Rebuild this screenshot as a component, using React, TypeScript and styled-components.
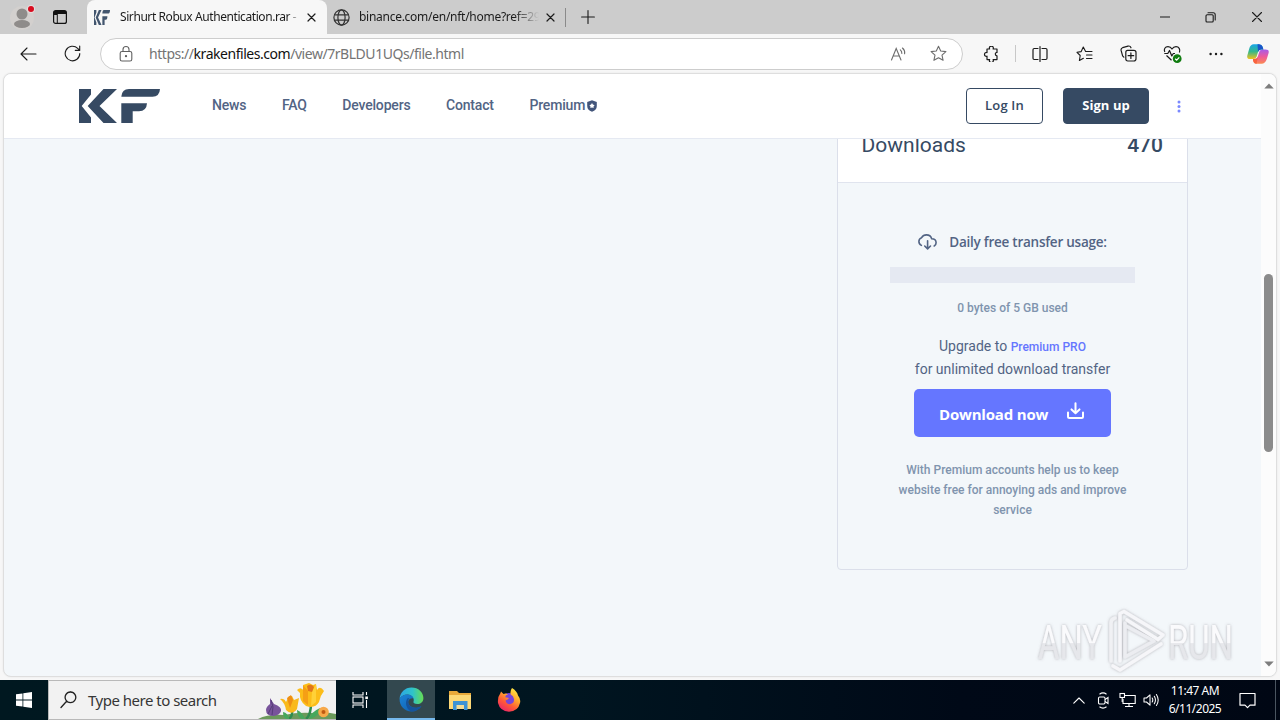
import styled, { createGlobalStyle } from 'styled-components'

const GlobalStyle = createGlobalStyle`
  * {
    box-sizing: border-box;
  }

  body {
    margin: 0;
    overflow: hidden;
    background: #f7f7f7;
  }

  svg {
    display: block;
    flex-shrink: 0;
  }
`

const Screen = styled.div`
  position: relative;
  width: 1280px;
  height: 720px;
  display: flex;
  flex-direction: column;
  overflow: hidden;
  font-family: 'Noto Sans', 'Open Sans', sans-serif;
`

const Cell = styled.div<{ $w: number }>`
  width: ${(p) => p.$w}px;
  height: 100%;
  flex-shrink: 0;
  display: flex;
  align-items: center;
  justify-content: center;
`

const Spacer = styled.div`
  flex: 1;
`

/* ---------- tab strip ---------- */

const TabStrip = styled.div`
  height: 34px;
  flex-shrink: 0;
  display: flex;
  align-items: center;
  background: #cccccc;
`

const Tab = styled.div<{ $active?: boolean }>`
  width: ${(p) => (p.$active ? 240 : 238)}px;
  height: 34px;
  margin-left: ${(p) => (p.$active ? 11 : 0)}px;
  padding: 0 ${(p) => (p.$active ? 11 : 10)}px 0 ${(p) => (p.$active ? 7 : 6)}px;
  display: flex;
  align-items: center;
  border-radius: 8px 8px 0 0;
  background: ${(p) => (p.$active ? '#f7f7f7' : 'transparent')};
`

const TabTitle = styled.div<{ $gap: number; $spacing: number; $fade: string }>`
  flex: 1;
  margin-left: ${(p) => p.$gap}px;
  margin-right: 7px;
  overflow: hidden;
  white-space: nowrap;
  font-size: 12px;
  line-height: 18px;
  letter-spacing: ${(p) => p.$spacing}px;
  color: #1b1b1b;
  mask-image: linear-gradient(to right, #000 ${(p) => p.$fade}, transparent 100%);
`

const TabDivider = styled.div`
  width: 1px;
  height: 19px;
  background: #8a8a8a;
`

/* ---------- toolbar ---------- */

const Toolbar = styled.div`
  height: 39px;
  flex-shrink: 0;
  padding-left: 6px;
  display: flex;
  align-items: center;
  background: #f7f7f7;
`

const AddressBar = styled.div`
  width: 863px;
  height: 32px;
  margin: 0 6px;
  padding: 0 5px 0 14px;
  display: flex;
  align-items: center;
  border: 1px solid #cdcdcd;
  border-radius: 16px;
  background: #fff;
`

const Url = styled.div`
  flex: 1;
  margin-left: 13px;
  font-size: 14px;
  line-height: 20px;
  letter-spacing: -0.46px;
  color: #747474;

  b {
    font-weight: 400;
    color: #111;
  }
`

const ToolDivider = styled.div`
  width: 1px;
  height: 17px;
  margin: 0 2px;
  background: #c8c8c8;
`

/* ---------- page ---------- */

const PageArea = styled.div`
  height: 607px;
  flex-shrink: 0;
  padding: 0 3px 3px;
  background: #f7f7f7;
`

const Page = styled.div`
  height: 604px;
  display: flex;
  overflow: hidden;
  border: 1px solid #dedede;
  border-radius: 8px;
  background: #f3f7fa;
  box-shadow: 0 0 2px rgba(0, 0, 0, 0.08);
`

const Site = styled.div`
  width: 1257px;
  display: flex;
  flex-direction: column;
  font-family: Roboto, sans-serif;
`

const SiteHeader = styled.header`
  height: 65px;
  flex-shrink: 0;
  padding: 0 73px 0 74.5px;
  display: flex;
  align-items: center;
  border-bottom: 1px solid #e5e9f2;
  background: #fff;
`

const Nav = styled.nav`
  margin: 0 0 2px 52.5px;
  display: flex;
  gap: 35.6px;
  font-size: 14px;
  font-weight: 500;
  line-height: 20px;
  letter-spacing: -0.18px;
  color: #526484;
`

const NavItem = styled.a`
  display: flex;
  align-items: center;
  gap: 2px;

  svg {
    margin-top: 2px;
  }
`

const HeaderButton = styled.button<{ $solid?: boolean }>`
  width: ${(p) => (p.$solid ? 86 : 77)}px;
  height: 36px;
  margin-right: 20px;
  padding: 0 0 2px;
  border: 1px solid #364a63;
  border-radius: 4px;
  background: ${(p) => (p.$solid ? '#364a63' : '#fff')};
  color: ${(p) => (p.$solid ? '#fff' : '#364a63')};
  font-family: 'Open Sans', sans-serif;
  font-size: 13px;
  font-weight: ${(p) => (p.$solid ? 700 : 600)};
  letter-spacing: ${(p) => (p.$solid ? 0.05 : 0.2)}px;
`

const Content = styled.main`
  flex: 1;
  padding-right: 73px;
  overflow: hidden;
  display: flex;
  align-items: flex-start;
  justify-content: flex-end;
`

const Card = styled.section`
  width: 351px;
  height: 464px;
  margin-top: -33px;
  border: 1px solid #dbdfea;
  border-radius: 4px;
  background: #f3f7fa;
`

const CardRow = styled.div`
  height: 76px;
  padding: 26px 24px 0 23.5px;
  display: flex;
  justify-content: space-between;
  border-bottom: 1px solid #e0e4ee;
  background: #fff;
  font-size: 21px;
  line-height: 24px;
  color: #364a63;

  strong {
    font-weight: 500;
  }
`

const CardBody = styled.div`
  padding: 48px 52px 0;
  display: flex;
  flex-direction: column;
  align-items: center;
  text-align: center;
`

const UsageTitle = styled.div`
  height: 21px;
  display: flex;
  align-items: center;
  gap: 12px;
  font-family: 'Open Sans', sans-serif;
  font-size: 13.5px;
  font-weight: 600;
  letter-spacing: -0.25px;
  white-space: nowrap;
  color: #526484;
`

const UsageBar = styled.div`
  width: 245px;
  height: 16px;
  margin-top: 15px;
  background: #e5e9f2;
`

const Muted = styled.p<{ $top: number }>`
  margin: ${(p) => p.$top}px -4px 0;
  font-size: 12px;
  font-weight: 500;
  line-height: 20px;
  color: #8094ae;
`

const Upgrade = styled.p`
  height: 46px;
  margin: 17px 0 0;
  font-size: 14px;
  line-height: 22.75px;
  color: #526484;

  a {
    font-size: 12px;
    font-weight: 500;
    line-height: 1;
    color: #6576ff;
  }
`

const DownloadButton = styled.button`
  width: 197px;
  height: 48px;
  margin-top: 8px;
  padding: 2px 25px 0;
  display: flex;
  align-items: center;
  justify-content: space-between;
  border: 0;
  border-radius: 5px;
  background: #6576ff;
  color: #fff;
  font-family: 'Open Sans', sans-serif;
  font-size: 15px;
  font-weight: 700;
  letter-spacing: -0.18px;
  white-space: nowrap;

  svg {
    margin-bottom: 7px;
  }
`

const ScrollTrack = styled.div`
  width: 15px;
  padding: 9px 0;
  display: flex;
  flex-direction: column;
  align-items: center;
  background: #fcfcfc;
`

const ScrollThumb = styled.div`
  width: 9px;
  height: 178px;
  margin: 185px 0 auto;
  border-radius: 5px;
  background: #8b8b8b;
`

const Watermark = styled.div`
  position: absolute;
  left: 1032px;
  top: 601px;
`

/* ---------- taskbar ---------- */

const Taskbar = styled.div`
  height: 40px;
  flex-shrink: 0;
  display: flex;
  align-items: center;
  background: linear-gradient(to right, #001820, #001520 45%, #000917 75%, #000714);
  color: #fff;
`

const SearchBox = styled.div`
  width: 288px;
  height: 40px;
  padding-left: 11px;
  display: flex;
  align-items: center;
  border: 1px solid #b9b9b9;
  border-right: 0;
  background: #f2f2f2;
  color: #363636;
  font-size: 15px;
  letter-spacing: -0.5px;

  span {
    flex: 1;
    margin-left: 11px;
    white-space: nowrap;
  }
`

const AppButton = styled.div<{ $active?: boolean }>`
  width: 48px;
  height: 40px;
  margin-right: 1px;
  display: flex;
  align-items: center;
  justify-content: center;
  background: ${(p) => (p.$active ? '#33484f' : 'transparent')};
  border-bottom: ${(p) => (p.$active ? '2px solid #76b9ed' : '0')};
`

const Clock = styled.div`
  width: 64px;
  font-size: 12px;
  line-height: 18px;
  letter-spacing: -0.5px;
  text-align: center;
  white-space: nowrap;
`

const TrayEdge = styled.div`
  width: 1px;
  height: 40px;
  margin: 0 4px 0 8px;
  background: #4a5560;
`

/* ---------- icons ---------- */

const KfLogo = ({ width, height, color }: { width: number; height: number; color: string }) => (
  <svg width={width} height={height} viewBox="0 0 81 34" preserveAspectRatio="none" fill={color}>
    <path d="M0 0H12V5.5L2.7 17 12 28.5V34H0z" />
    <path d="M24.5 0H38L20.5 17 38 34H24.5L8.7 17z" />
    <path d="M42.3 7.7Q42.8 0 50 0H81Q80.5 7.7 73.5 7.7z" />
    <path d="M42.3 14.3H68Q67.5 22.3 60 22.3H53.7V34H42.3z" />
  </svg>
)

const Line = ({ d, w = 16, h = 16, color = '#1b1b1b', sw = 1.1 }: { d: string; w?: number; h?: number; color?: string; sw?: number }) => (
  <svg width={w} height={h} viewBox={`0 0 ${w} ${h}`} fill="none" stroke={color} strokeWidth={sw} strokeLinecap="round" strokeLinejoin="round">
    <path d={d} />
  </svg>
)

const ProfileIcon = () => (
  <svg width="30" height="30" viewBox="0 0 30 30">
    <circle cx="15" cy="16" r="12" fill="#d3d0ce" />
    <circle cx="15" cy="12" r="5.5" fill="#8f8c8a" />
    <ellipse cx="15" cy="22" rx="8" ry="4" fill="#8f8c8a" />
    <circle cx="24" cy="7" r="4" fill="#e6dcdc" />
    <circle cx="24" cy="7" r="3" fill="#d80c1e" />
  </svg>
)

const TabActionsIcon = () => (
  <svg width="14" height="14" viewBox="0 0 14 14">
    <rect x="0.6" y="0.6" width="12.8" height="12.8" rx="2" fill="none" stroke="#111" strokeWidth="1.2" />
    <path d="M1 1H13V4H1zM1 4H4V5H1z" fill="#111" />
    <path d="M4.3 4V13" stroke="#111" />
  </svg>
)

const GlobeIcon = () => (
  <svg width="17" height="17" viewBox="0 0 17 17" fill="none" stroke="#333" strokeWidth="1.2">
    <circle cx="8.5" cy="8.5" r="7.6" />
    <ellipse cx="8.5" cy="8.5" rx="3.6" ry="7.6" />
    <path d="M1.5 5.8H15.5M1.5 11.2H15.5" />
  </svg>
)

const LockIcon = () => (
  <svg width="16" height="18" viewBox="0 0 16 18" fill="none" stroke="#606060" strokeWidth="1.1">
    <rect x="2.2" y="6.5" width="11.6" height="9.5" rx="1.8" />
    <path d="M5 6.5V4.5A3 3 0 0 1 11 4.5V6.5" />
    <circle cx="8" cy="11.2" r="0.6" fill="#606060" />
  </svg>
)

const ReadAloudIcon = () => (
  <svg width="18" height="16" viewBox="0 0 18 16" fill="none" stroke="#6d6d6d" strokeWidth="1.1" strokeLinecap="round">
    <path d="M1.5 14 6.2 2.5 11 14M3.2 10H9.3M10.3 3.8Q12 5.2 11.8 7.4M12.4 2Q15.3 4.4 14.6 7.8" />
  </svg>
)

const HealthIcon = () => (
  <svg width="20" height="20" viewBox="0 0 20 20" fill="none" stroke="#1b1b1b" strokeWidth="1.2" strokeLinejoin="round">
    <path d="M2.8 8C1.4 5.2 3.2 2.6 6 2.6 7.8 2.6 9.2 3.6 10 5 10.9 3.6 12.3 2.6 14 2.6 16.8 2.6 18.6 5.4 17.4 8.5M2.3 9.5H5.8L7.5 6.5 9.8 12 11.3 9.5H13M4.5 11.5 9.5 16.3" />
    <circle cx="15.2" cy="14.7" r="4.4" fill="#107c10" stroke="none" />
    <path d="M13.2 14.8 14.7 16.2 17.3 13.3" stroke="#fff" />
  </svg>
)

const CopilotIcon = () => (
  <svg width="22" height="20" viewBox="0 0 22 20">
    <defs>
      <linearGradient id="cpA" x1="0" y1="0" x2="0" y2="1">
        <stop offset="0" stopColor="#18a6e8" />
        <stop offset="0.5" stopColor="#35b88a" />
        <stop offset="1" stopColor="#f3c21b" />
      </linearGradient>
      <linearGradient id="cpB" x1="0" y1="0" x2="0" y2="1">
        <stop offset="0" stopColor="#a65bea" />
        <stop offset="0.5" stopColor="#ee5a9b" />
        <stop offset="1" stopColor="#fb8a50" />
      </linearGradient>
    </defs>
    <path d="M16 5.5H18.5Q22.5 5.5 21.6 9L19.8 15Q18.3 19.8 14.5 19.8H9Q6.8 19.8 6.2 17L6 14.8H8Q10.3 14.8 11 12L12.4 7.5Q13 5.5 16 5.5z" fill="url(#cpB)" />
    <path d="M6.8 0.3H12Q14.8 0.3 15.6 2.8L16.4 5.5H14Q11.8 5.5 11 8L9.6 12.7Q8.8 15 6 15H3Q-.6 15 .4 11.2L2.2 4.8Q3.3 .3 6.8 .3z" fill="url(#cpA)" />
    <path d="M10.5 .3H12Q14.8 .3 15.6 2.8L16.4 5.5H14Q11.8 5.5 11 8z" fill="#1b55c9" />
    <path d="M6 15H9Q10.4 14.8 11 12.8L9.5 19.8H9Q6.8 19.8 6.2 17z" fill="#f8633f" />
  </svg>
)

const ShieldIcon = () => (
  <svg width="10" height="12" viewBox="0 0 10 12">
    <path d="M5 .2 9.8 2V6Q9.8 10.3 5 11.8 .2 10.3 .2 6V2z" fill="#42557a" />
    <path d="M5 3 5.9 4.6 7.6 5.2 6.5 6.5 6.6 8 5 7.4 3.4 8 3.5 6.5 2.4 5.2 4.1 4.6z" fill="#fff" />
  </svg>
)

const DotsIcon = () => (
  <svg width="4" height="13" viewBox="0 0 4 13" fill="#7a88ff">
    <circle cx="2" cy="2" r="1.5" />
    <circle cx="2" cy="6.5" r="1.5" />
    <circle cx="2" cy="11" r="1.5" />
  </svg>
)

const MoreIcon = () => (
  <svg width="14" height="4" viewBox="0 0 14 4" fill="#1b1b1b">
    <circle cx="1.6" cy="2" r="1.2" />
    <circle cx="7" cy="2" r="1.2" />
    <circle cx="12.4" cy="2" r="1.2" />
  </svg>
)

const Arrow = ({ down }: { down?: boolean }) => (
  <svg width="10" height="6" viewBox="0 0 10 6">
    <path d={down ? 'M.3.5H9.7L5 5.5z' : 'M.3 5.5H9.7L5 .5z'} fill="#7d7d7d" />
  </svg>
)

const CloudDownIcon = () => (
  <Line
    w={19}
    h={16}
    color="#526484"
    sw={1.6}
    d="M3.4 11.4C1.8 10.6 .9 9.2 .9 7.5 .9 5.6 2 4.2 3.6 3.7 4.6 2 6.3 .9 8.4 .9 11 .9 13 2.4 13.7 4.8 16.2 4.8 18.1 6.4 18.1 8.7 18.1 10.2 17.4 11.3 16.2 12M9.6 6.8V14.5M6.7 12 9.6 14.8 12.5 12"
  />
)

const Flowers = () => (
  <svg width="80" height="38" viewBox="0 0 80 38">
    <path d="M2 38Q12 33 28 34 42 31 56 32 68 30 80 33V38z" fill="#6b9a5b" />
    <path d="M10 29Q10 26 14 23L14 17 18 23Q26 26 25 30 24 34 18 35 10 35 10 29z" fill="#78549b" />
    <path d="M15 19 17 26 16 34M16 25 12 33" stroke="#553b78" strokeWidth="1" fill="none" />
    <g transform="translate(-5 0)">
      <path d="M38 38Q42 35 41 28" stroke="#2e8d50" strokeWidth="2.5" fill="none" />
      <path d="M38 38Q37 32 32 31 32 37 36 38z" fill="#46a85d" />
      <path d="M29 18Q33 17 35 21L38 15 41 15 43 19 48 17 46 28Q41 35 35 29 34 22 29 18z" fill="#f9b91c" />
      <path d="M36 17 40 14 42 19 39 27z" fill="#ee8e15" />
    </g>
    <g transform="translate(-6 0)">
      <path d="M56 38Q61 34 61 22" stroke="#2e8d50" strokeWidth="2.5" fill="none" />
      <path d="M55 38Q52 31 47 29 47 36 52 38zM59 38Q61 31 70 27 70 35 60 38z" fill="#46a85d" />
      <path d="M47 9Q51 5 54 10L53 4 59 2 63 4 66 3 67 9Q70 4 74 10 70 15 69 21 65 28 56 25 49 20 50 12z" fill="#fcbd19" />
      <path d="M53 4 58 10 58 24 53 20z" fill="#f59f15" />
      <path d="M66 3 66 21 61 25 62 11z" fill="#ffd138" />
      <path d="M57 5Q61 2 64 6L62 11 58 10z" fill="#e0761b" />
    </g>
    <circle cx="67.5" cy="31" r="5.3" fill="#f7a94a" />
    <circle cx="67.5" cy="31" r="2" fill="#c05a12" />
  </svg>
)

const WindowsIcon = () => (
  <svg width="16" height="16" viewBox="0 0 16 16" fill="#fff">
    <path d="M0 2.3 6.5 1.4V7.6H0zM7.3 1.2 16 0V7.6H7.3zM0 8.4H6.5V14.6L0 13.7zM7.3 8.4H16V16L7.3 14.8z" />
  </svg>
)

const TaskViewIcon = () => (
  <svg width="17" height="16" viewBox="0 0 17 16" fill="none" stroke="#fff" strokeWidth="1.1">
    <path d="M1 0V3H11V0M1 16V13H11V16M14.5 0V3M14.5 8V16" />
    <rect x="1" y="5" width="10" height="6" />
    <rect x="13.3" y="4.5" width="2.6" height="2.6" fill="#fff" stroke="none" />
  </svg>
)

const EdgeIcon = () => (
  <svg width="25" height="25" viewBox="0 0 25 25">
    <defs>
      <linearGradient id="edgeTop" x1="0" y1="0.5" x2="1" y2="0.5">
        <stop offset="0" stopColor="#2ca6e6" />
        <stop offset="0.55" stopColor="#2fc3c9" />
        <stop offset="1" stopColor="#67dd52" />
      </linearGradient>
      <linearGradient id="edgeLow" x1="0" y1="0" x2="1" y2="1">
        <stop offset="0" stopColor="#1b84d8" />
        <stop offset="1" stopColor="#0e5aa8" />
      </linearGradient>
    </defs>
    <path d="M.6 12C1 5.5 6 .6 12.5 .6 19.5 .6 24.4 5.5 24.4 11 24.4 15 21.5 17 18.3 17 15.5 17 14 16 14.5 14.8 15.8 11.5 12.8 7.5 8.5 7.5 5 7.5 2 9 .6 12z" fill="url(#edgeTop)" />
    <path d="M.6 12C2 9 5 7.5 8.5 7.5 11.8 7.5 14 9.3 14.4 11.2 10 10.6 8.3 14 9.8 17.3 12 21.3 17.6 21.8 22.5 19 20.2 22.6 16.6 24.5 12.5 24.5 5.6 24.5 .3 18.8 .6 12z" fill="url(#edgeLow)" />
    <path d="M8.8 11C5.6 14.6 6.6 21.5 12.2 24.5 16.6 24.5 20.2 22.6 22.5 19 17.6 21.8 12 21.3 9.8 17.3 8.8 15 8.9 12.8 10.4 11.6z" fill="#16539b" />
  </svg>
)

const FolderIcon = () => (
  <svg width="22" height="19" viewBox="0 0 22 19">
    <path d="M0 0H8L10 2H22V18H0z" fill="#e8a93a" />
    <path d="M0 4H22V18H0z" fill="#fcd876" />
    <path d="M4 10H18.5V19H15V14.5H8V19H4z" fill="#3c93d4" />
    <path d="M7.5 14H15V18H7.5z" fill="#f3dc95" />
  </svg>
)

const FirefoxIcon = () => (
  <svg width="24" height="24" viewBox="0 0 24 24">
    <defs>
      <linearGradient id="fox" x1="0.8" y1="0" x2="0.2" y2="1">
        <stop offset="0" stopColor="#fff047" />
        <stop offset="0.35" stopColor="#ffab2e" />
        <stop offset="0.65" stopColor="#ff5a36" />
        <stop offset="1" stopColor="#e81f6e" />
      </linearGradient>
    </defs>
    <circle cx="12" cy="13" r="8" fill="#7745d8" />
    <path d="M15 0Q20 3 21 7.5 24 11 23 15 21 23.5 12 23.7 3 23.2 1 15 .4 9 3.5 5L4 3.5 6.5 6Q9 5 11 6.5 8 7 8.3 9.3L12 10Q11 12 8.5 12.4 9.5 16.4 13 16.2 17.5 15.5 17 11 16.5 8 13.7 6.6 12.8 3 15 0z" fill="url(#fox)" />
  </svg>
)

const MeetIcon = () => (
  <svg width="14" height="17" viewBox="0 0 14 17" fill="none" stroke="#fff" strokeWidth="1.1">
    <rect x="2.5" y="5" width="6.5" height="7" rx="1.2" />
    <path d="M9 7.5 12 5.5V11.5L9 9.5M3.5 2.2Q7-.4 10.5 2.2M3.5 14.8Q7 17.4 10.5 14.8" />
  </svg>
)

const NetworkIcon = () => (
  <svg width="17" height="16" viewBox="0 0 17 16" fill="none" stroke="#fff" strokeWidth="1.1">
    <path d="M6 3.5H16.2V11.5H4V7M10 11.5V14.5M6 14.5H14" />
    <rect x="1" y="1.5" width="4.5" height="4" />
    <path d="M3.2 5.5V10" />
  </svg>
)

const SoundIcon = () => (
  <Line w={17} h={14} color="#fff" sw={1.05} d="M1 5H3.5L7 1.8V12.2L3.5 9H1zM9.2 5Q10.4 7 9.2 9M11.3 3.2Q13.6 7 11.3 10.8M13.4 1.5Q17 7 13.4 12.5" />
)

const AnyRunMark = () => (
  <svg width="208" height="76" viewBox="0 0 208 76">
    <defs>
      <filter id="wmShadow" x="-15%" y="-15%" width="130%" height="130%">
        <feDropShadow dx="0" dy="0" stdDeviation="1.6" floodColor="#77737b" floodOpacity="0.55" />
      </filter>
      <linearGradient id="wmFill" x1="0" y1="0" x2="0" y2="1">
        <stop offset="0.5" stopColor="#fafafc" />
        <stop offset="0.52" stopColor="#e6e7eb" />
      </linearGradient>
    </defs>
    <g filter="url(#wmShadow)" fill="url(#wmFill)" fontFamily="Roboto, sans-serif" fontSize="49">
      <text x="6" y="58" textLength="64" lengthAdjust="spacingAndGlyphs">ANY</text>
      <text x="136" y="58" textLength="65" lengthAdjust="spacingAndGlyphs">RUN</text>
    </g>
    <g filter="url(#wmShadow)" fill="none" strokeWidth="3.6" strokeLinejoin="round" strokeLinecap="round">
      <path d="M79 60V22Q79 18 83 17" stroke="#f0f1f4" />
      <path d="M81 65 88 69 129 43M88 60V12.5L92 10.5 131 34 126 38.5 95 19" stroke="#f6f6f9" />
      <path d="M93 22V56L122 40 94 25" stroke="#ecedf1" />
    </g>
  </svg>
)

const closePath = 'M1 1 8 8M8 1 1 8'
const starPath = 'M8.5 1.2 10.7 6 15.9 6.6 12 10.1 13.1 15.3 8.5 12.7 3.9 15.3 5 10.1 1.1 6.6 6.3 6z'
const navItems = ['News', 'FAQ', 'Developers', 'Contact']

function Browser() {
  return (
    <>
      <TabStrip>
        <Cell $w={44}><ProfileIcon /></Cell>
        <Cell $w={32}><TabActionsIcon /></Cell>
        <Tab $active>
          <KfLogo width={16} height={15} color="#42556e" />
          <TabTitle $gap={10} $spacing={-0.42} $fade="93%">Sirhurt Robux Authentication.rar -</TabTitle>
          <Line w={9} h={9} sw={1.2} d={closePath} />
        </Tab>
        <Tab>
          <GlobeIcon />
          <TabTitle $gap={9} $spacing={-0.27} $fade="86%">binance.com/en/nft/home?ref=29</TabTitle>
          <Line w={9} h={9} sw={1.2} d={closePath} />
        </Tab>
        <TabDivider />
        <Cell $w={43}><Line w={14} h={14} d="M7 .6V13.4M.6 7H13.4" /></Cell>
        <Spacer />
        <Cell $w={46}><Line w={10} h={2} d="M0 1H10" /></Cell>
        <Cell $w={46}><Line w={12} h={11} d="M2.2 2.8H7.2Q8.2 2.8 8.2 3.8V9Q8.2 10 7.2 10H2Q1 10 1 9V3.8Q1 2.8 2.2 2.8M3 .8H8.2Q10.2 .8 10.2 2.8V8" /></Cell>
        <Cell $w={46}><Line w={10} h={10} d="M.5.5 9.5 9.5M9.5.5.5 9.5" /></Cell>
      </TabStrip>
      <Toolbar>
        <Cell $w={44}><Line w={17} h={14} d="M16 7H1M7 1 1 7 7 13" /></Cell>
        <Cell $w={44}><Line w={17} h={17} d="M15.8 8.5A7.3 7.3 0 1 1 13.7 3.4L15.6 5.3M15.7 1V5.4H11.3" /></Cell>
        <AddressBar>
          <Cell $w={21}><LockIcon /></Cell>
          <Url>https://<b>krakenfiles.com</b>/view/7rBLDU1UQs/file.html</Url>
          <Cell $w={40}><ReadAloudIcon /></Cell>
          <Cell $w={38}><Line w={17} h={17} color="#6d6d6d" d={starPath} /></Cell>
        </AddressBar>
        <Cell $w={44}>
          <Line w={16} h={16} sw={1.2} d="M4 3H6.6A2 2 0 1 1 10.1 3H14V6.4A1.7 1.7 0 1 0 14 9.8V13.6H10.1A2 2 0 1 1 6.6 13.6H4V10.2A1.9 1.9 0 1 1 4 6.6z" />
        </Cell>
        <ToolDivider />
        <Cell $w={44}><Line w={17} h={16} sw={1.2} d="M6 2.5H2.2Q1 2.5 1 3.7V12.3Q1 13.5 2.2 13.5H6M10 2.5H13.8Q15 2.5 15 3.7V12.3Q15 13.5 13.8 13.5H10M8 .6V15.4" /></Cell>
        <Cell $w={44}><Line w={17} h={16} d="M9.6 5.5 7.3 1 5.2 5.6 1 6.3 4.2 9.5 3.4 14.5 7.4 12.3M9.6 5.5H16M10.5 9H16M10.5 12.5H16" /></Cell>
        <Cell $w={44}><Line w={17} h={17} sw={1.2} d="M7.6 5.4H13.8Q16 5.4 16 7.4V13.8Q16 16 13.8 16H7.8Q5.8 16 5.8 13.8V7.4Q5.8 5.4 7.6 5.4M10.9 7.9V13.5M8.1 10.7H13.7M3.8 12.2 2.6 10.8 1.1 5.4Q.7 3.4 2.6 2.7L8 1.1Q10.2.6 11 2.8" /></Cell>
        <Cell $w={44}><HealthIcon /></Cell>
        <Cell $w={44}><MoreIcon /></Cell>
        <Cell $w={40}><CopilotIcon /></Cell>
      </Toolbar>
    </>
  )
}

function KrakenPage() {
  return (
    <PageArea>
      <Page>
        <Site>
          <SiteHeader>
            <KfLogo width={81} height={34} color="#364a63" />
            <Nav>
              {navItems.map((item) => (
                <NavItem key={item}>{item}</NavItem>
              ))}
              <NavItem>Premium<ShieldIcon /></NavItem>
            </Nav>
            <Spacer />
            <HeaderButton>Log In</HeaderButton>
            <HeaderButton $solid>Sign up</HeaderButton>
            <Cell $w={19}><DotsIcon /></Cell>
          </SiteHeader>
          <Content>
            <Card>
              <CardRow>
                <span>Downloads</span>
                <strong>470</strong>
              </CardRow>
              <CardBody>
                <UsageTitle>
                  <CloudDownIcon />
                  Daily free transfer usage:
                </UsageTitle>
                <UsageBar />
                <Muted $top={15}>0 bytes of 5 GB used</Muted>
                <Upgrade>
                  Upgrade to <a>Premium PRO</a>
                  <br />
                  for unlimited download transfer
                </Upgrade>
                <DownloadButton>
                  Download now
                  <Line w={20} h={18} color="#fff" sw={2} d="M2 10.5V14.5Q2 16 3.5 16H15.5Q17 16 17 14.5V10.5M9.5 1.2V11M5.5 7.4 9.5 11.2 13.5 7.4" />
                </DownloadButton>
                <Muted $top={23}>With Premium accounts help us to keep website free for annoying ads and improve service</Muted>
              </CardBody>
            </Card>
          </Content>
        </Site>
        <ScrollTrack>
          <Arrow />
          <ScrollThumb />
          <Arrow down />
        </ScrollTrack>
      </Page>
    </PageArea>
  )
}

function WindowsTaskbar() {
  return (
    <Taskbar>
      <Cell $w={48}><WindowsIcon /></Cell>
      <SearchBox>
        <Line w={17} h={18} color="#222" sw={1.3} d="M10.5 1A5.3 5.3 0 1 1 10.4 1M6.6 10.3 1 16.5" />
        <span>Type here to search</span>
        <Flowers />
      </SearchBox>
      <Cell $w={48}><TaskViewIcon /></Cell>
      <Cell $w={3} />
      <AppButton $active><EdgeIcon /></AppButton>
      <AppButton><FolderIcon /></AppButton>
      <AppButton><FirefoxIcon /></AppButton>
      <Spacer />
      <Cell $w={24}><Line w={12} h={7} color="#fff" d="M.8 6.2 6 1 11.2 6.2" /></Cell>
      <Cell $w={24}><MeetIcon /></Cell>
      <Cell $w={24}><NetworkIcon /></Cell>
      <Cell $w={24}><SoundIcon /></Cell>
      <Clock>
        <div>11:47 AM</div>
        <div>6/11/2025</div>
      </Clock>
      <Cell $w={40}><Line w={17} h={17} color="#fff" sw={1.2} d="M1 1.5H16V13.2H11L8.5 15.7 6 13.2H1z" /></Cell>
      <TrayEdge />
    </Taskbar>
  )
}

export default function App() {
  return (
    <Screen>
      <GlobalStyle />
      <Browser />
      <KrakenPage />
      <WindowsTaskbar />
      <Watermark>
        <AnyRunMark />
      </Watermark>
    </Screen>
  )
}
